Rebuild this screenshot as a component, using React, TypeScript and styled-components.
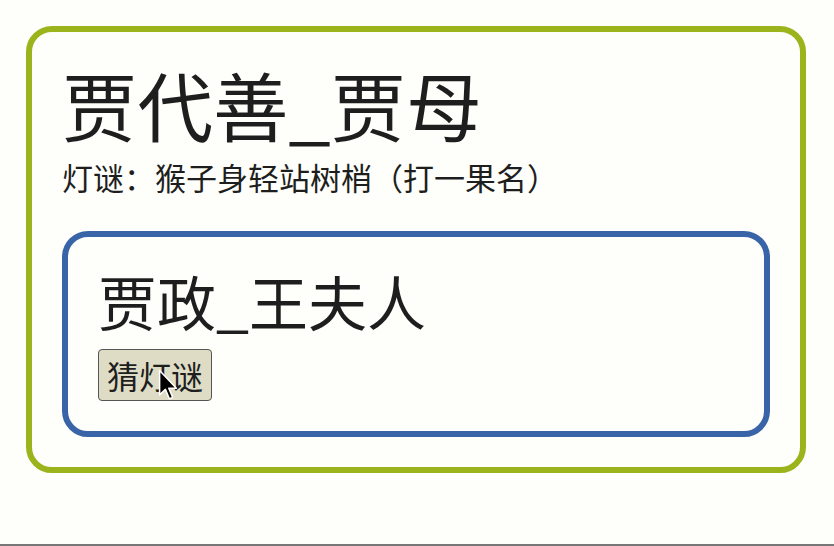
import React from "react";
import styled, { createGlobalStyle } from "styled-components";

const GlobalStyle = createGlobalStyle`
	html, body {
		margin: 0;
		padding: 0;
		background: #fefefa;
	}
	body {
		font-family: "Noto Sans CJK SC", "Noto Sans", sans-serif;
		color: #1e1e1e;
	}
`;

const Page = styled.div`
	box-sizing: border-box;
	height: 546px;
	padding: 26px 0 0 26px;
	border-bottom: 2px solid #777;
`;

const Panel = styled.div<{ $color: string }>`
	box-sizing: border-box;
	border: 6px solid ${(p) => p.$color};
	border-radius: 26px;
	padding: 34px 30px 30px;
`;

const Outer = styled(Panel)`
	width: 780px;
`;

const Title = styled.h1<{ $size: number }>`
	margin: 0;
	font-size: ${(p) => p.$size}px;
	font-weight: normal;
	line-height: 1;
	color: #1e1e1e;
`;

const Riddle = styled.p`
	margin: 19px 0 39px;
	font-size: 31px;
	line-height: 1;
`;

const GuessButton = styled.button`
	position: relative;
	margin-top: 19px;
	padding: 1px 8px;
	font-family: inherit;
	font-size: 32px;
	line-height: 48px;
	color: #1e1e1e;
	background: #dedcc4;
	border: 1px solid #555;
	border-radius: 4px;
	cursor: pointer;
`;

const Cursor = styled.svg`
	position: absolute;
	left: 59px;
	top: 19px;
`;

export default function App() {
	return (
		<>
			<GlobalStyle />
			<Page>
				<Outer $color="#9bb41c">
					<Title $size={75.5}>贾代善_贾母</Title>
					<Riddle>灯谜：猴子身轻站树梢（打一果名）</Riddle>
					<Panel $color="#3a64a8">
						<Title $size={59}>贾政_王夫人</Title>
						<GuessButton>
							猜灯谜
							<Cursor width="20" height="32" viewBox="0 0 13 21">
								<path
									d="M1 1 L1 17 L4.8 13.4 L7.4 19.5 L9.6 18.6 L7 12.6 L12 12.6 Z"
									fill="#000"
									stroke="#fff"
									strokeWidth="1"
									strokeLinejoin="round"
								/>
							</Cursor>
						</GuessButton>
					</Panel>
				</Outer>
			</Page>
		</>
	);
}
